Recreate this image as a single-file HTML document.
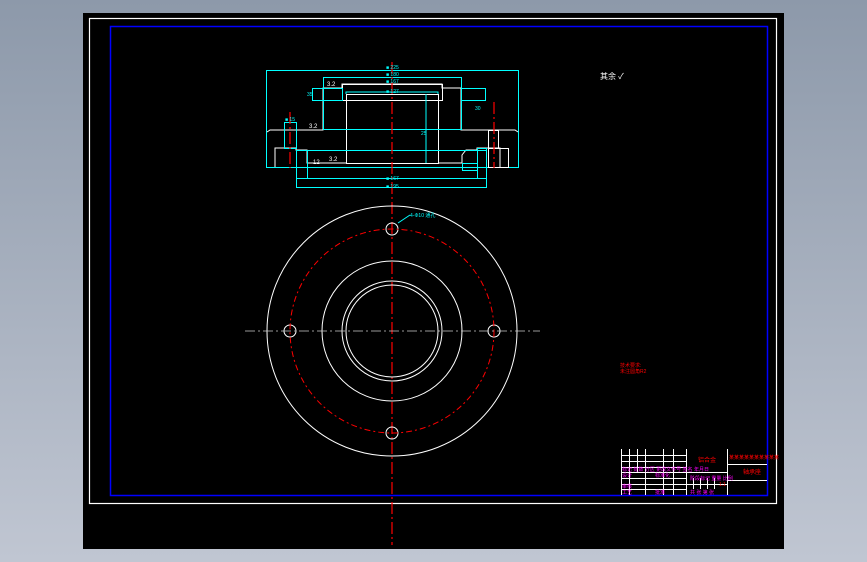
<!DOCTYPE html>
<html><head><meta charset="utf-8"><style>
html,body{margin:0;padding:0;}
body{width:867px;height:562px;overflow:hidden;background:linear-gradient(#8d99aa,#c0c6d2);}
svg{position:absolute;left:0;top:0;}
text{font-family:"Liberation Sans","Noto Sans CJK SC",sans-serif;}
</style></head><body>
<svg width="867" height="562" viewBox="0 0 867 562">
<rect x="83" y="13" width="701" height="536" fill="#000"/>
<rect x="89.5" y="18.5" width="687" height="485" fill="none" stroke="#fff" stroke-width="1.2"/>
<rect x="110.5" y="26.5" width="657" height="469" fill="none" stroke="#0000ff" stroke-width="1.5"/>

<!-- top view drawing -->
<g fill="none" stroke-width="1">
<rect x="266.5" y="70.5" width="252" height="97" stroke="#00ffff"/>
<polyline stroke="#fff" points="267,132 270,130 323,130 323,88 342,88 342,84 442,84 442,88 461,88 461,130 515,130 518,132"/>
<rect x="342.5" y="84.5" width="100" height="16" stroke="#fff"/>
<rect x="346.5" y="94.5" width="92" height="69" stroke="#fff"/>
<polyline stroke="#00ffff" points="346,94 346,92 438,92 438,94"/>
<rect x="323.5" y="77.5" width="138" height="52" stroke="#00ffff"/>
<rect x="312.5" y="88.5" width="30" height="12" stroke="#00ffff"/>
<rect x="461.5" y="88.5" width="24" height="12" stroke="#00ffff"/>
<polyline stroke="#fff" points="275,167 275,148 296,148 296,150 307,150 307,163 346,163"/>
<polyline stroke="#fff" points="438,163 462,163 462,155 466,150 477,150 477,148 500,148 500,167"/>
<rect x="284.5" y="122.5" width="12" height="26" stroke="#00ffff"/>
<rect x="296.5" y="150.5" width="11" height="28" stroke="#00ffff"/>
<rect x="296.5" y="150.5" width="190" height="37" stroke="#00ffff"/>
<rect x="307.5" y="150.5" width="170" height="28" stroke="#00ffff"/>
<rect x="488.5" y="130.5" width="10" height="18" stroke="#fff"/>
<rect x="477.5" y="148.5" width="9" height="30" stroke="#00ffff"/>
<rect x="462.5" y="163.5" width="15" height="7" stroke="#00ffff"/>
<rect x="488.5" y="148.5" width="20" height="19" stroke="#fff"/>
<line x1="426" y1="94" x2="426" y2="163" stroke="#00ffff"/>
</g>
<g stroke="#ff0000" stroke-width="1.2" stroke-dasharray="12,3,2,3">
<line x1="392" y1="62" x2="392" y2="545"/>
<line x1="290" y1="112" x2="290" y2="168"/>
<line x1="494" y1="102" x2="494" y2="168"/>
</g>
<g fill="#00ffff" font-size="5">
<text x="386" y="69">■ 225</text><text x="386" y="76">■ 180</text><text x="386" y="83">■ 167</text><text x="386" y="93">■ 127</text>
<text x="386" y="180">■ 167</text><text x="386" y="188">■ 195</text>
<text x="307" y="96">35</text><text x="475" y="110">30</text><text x="421" y="135">25</text><text x="285" y="121">■ 15</text>
</g>
<g fill="#fff" font-size="6"><text x="327" y="86">3.2</text><text x="309" y="128">3.2</text><text x="313" y="164">12</text><text x="329" y="161">3.2</text></g>

<!-- plan view -->
<g fill="none" stroke="#fff" stroke-width="1">
<circle cx="392" cy="331" r="125"/>
<circle cx="392" cy="331" r="70"/>
<circle cx="392" cy="331" r="50"/>
<circle cx="392" cy="331" r="46"/>
<circle cx="392" cy="229" r="6"/>
<circle cx="290" cy="331" r="6"/>
<circle cx="494" cy="331" r="6"/>
<circle cx="392" cy="433" r="6"/>
</g>
<circle cx="392" cy="331" r="102" fill="none" stroke="#ff0000" stroke-width="1" stroke-dasharray="6,3,2,3"/>
<line x1="245" y1="331" x2="540" y2="331" stroke="#ccc" stroke-width="0.8" stroke-dasharray="10,3,2,3"/>
<line x1="398" y1="223" x2="410" y2="215" stroke="#00ffff"/>
<text x="410" y="217" fill="#00ffff" font-size="5">4-Φ10 通孔</text>

<text x="600" y="79" fill="#fff" font-size="8">其余 ✓</text>
<text x="620" y="367" fill="#ff0000" font-size="5">技术要求:</text>
<text x="620" y="373" fill="#ff0000" font-size="5">未注圆角R2</text>

<!-- title block -->
<g stroke="#fff" stroke-width="1" fill="none">
<line x1="621.5" y1="449" x2="621.5" y2="495"/>
<line x1="629.5" y1="449" x2="629.5" y2="495"/>
<line x1="637.5" y1="449" x2="637.5" y2="472"/>
<line x1="645.5" y1="449" x2="645.5" y2="495"/>
<line x1="663.5" y1="449" x2="663.5" y2="495"/>
<line x1="673.5" y1="449" x2="673.5" y2="495"/>
<line x1="686.5" y1="449" x2="686.5" y2="495"/>
<line x1="727.5" y1="449" x2="727.5" y2="495"/>
<line x1="621" y1="455.5" x2="686" y2="455.5"/>
<line x1="621" y1="461.5" x2="686" y2="461.5"/>
<line x1="621" y1="467.5" x2="686" y2="467.5"/>
<line x1="621" y1="472.5" x2="727" y2="472.5"/>
<line x1="621" y1="478.5" x2="686" y2="478.5"/>
<line x1="621" y1="484.5" x2="727" y2="484.5"/>
<line x1="621" y1="489.5" x2="686" y2="489.5"/>
<line x1="727" y1="464.5" x2="767" y2="464.5"/>
<line x1="727" y1="480.5" x2="767" y2="480.5"/>
<line x1="693.5" y1="478" x2="693.5" y2="489"/>
<line x1="700.5" y1="478" x2="700.5" y2="489"/>
<line x1="707.5" y1="478" x2="707.5" y2="489"/>
<line x1="714.5" y1="478" x2="714.5" y2="489"/>
</g>
<g font-size="5">
<text x="622" y="471" fill="#ff00ff">标记 处数 分区 更改文件号 签名 年月日</text>
<text x="622" y="477" fill="#ff00ff">设计</text><text x="655" y="477" fill="#ff00ff">标准化</text>
<text x="622" y="488" fill="#ff00ff">审核</text><text x="622" y="494" fill="#ff00ff">工艺</text><text x="655" y="494" fill="#ff00ff">批准</text>
<text x="690" y="480" fill="#ff00ff">阶段标记 重量 比例</text>
<text x="690" y="494" fill="#ff00ff">共 张 第 张</text>
<text x="698" y="462" fill="#ff0000" font-size="6">铝合金</text>
<text x="729" y="459" fill="#ff0000">某某某某某某某某某某</text>
<text x="743" y="474" fill="#ff0000" font-size="6">轴承座</text>
<text x="719" y="486" fill="#ff0000">1:1</text>
</g>
</svg>
</body></html>
